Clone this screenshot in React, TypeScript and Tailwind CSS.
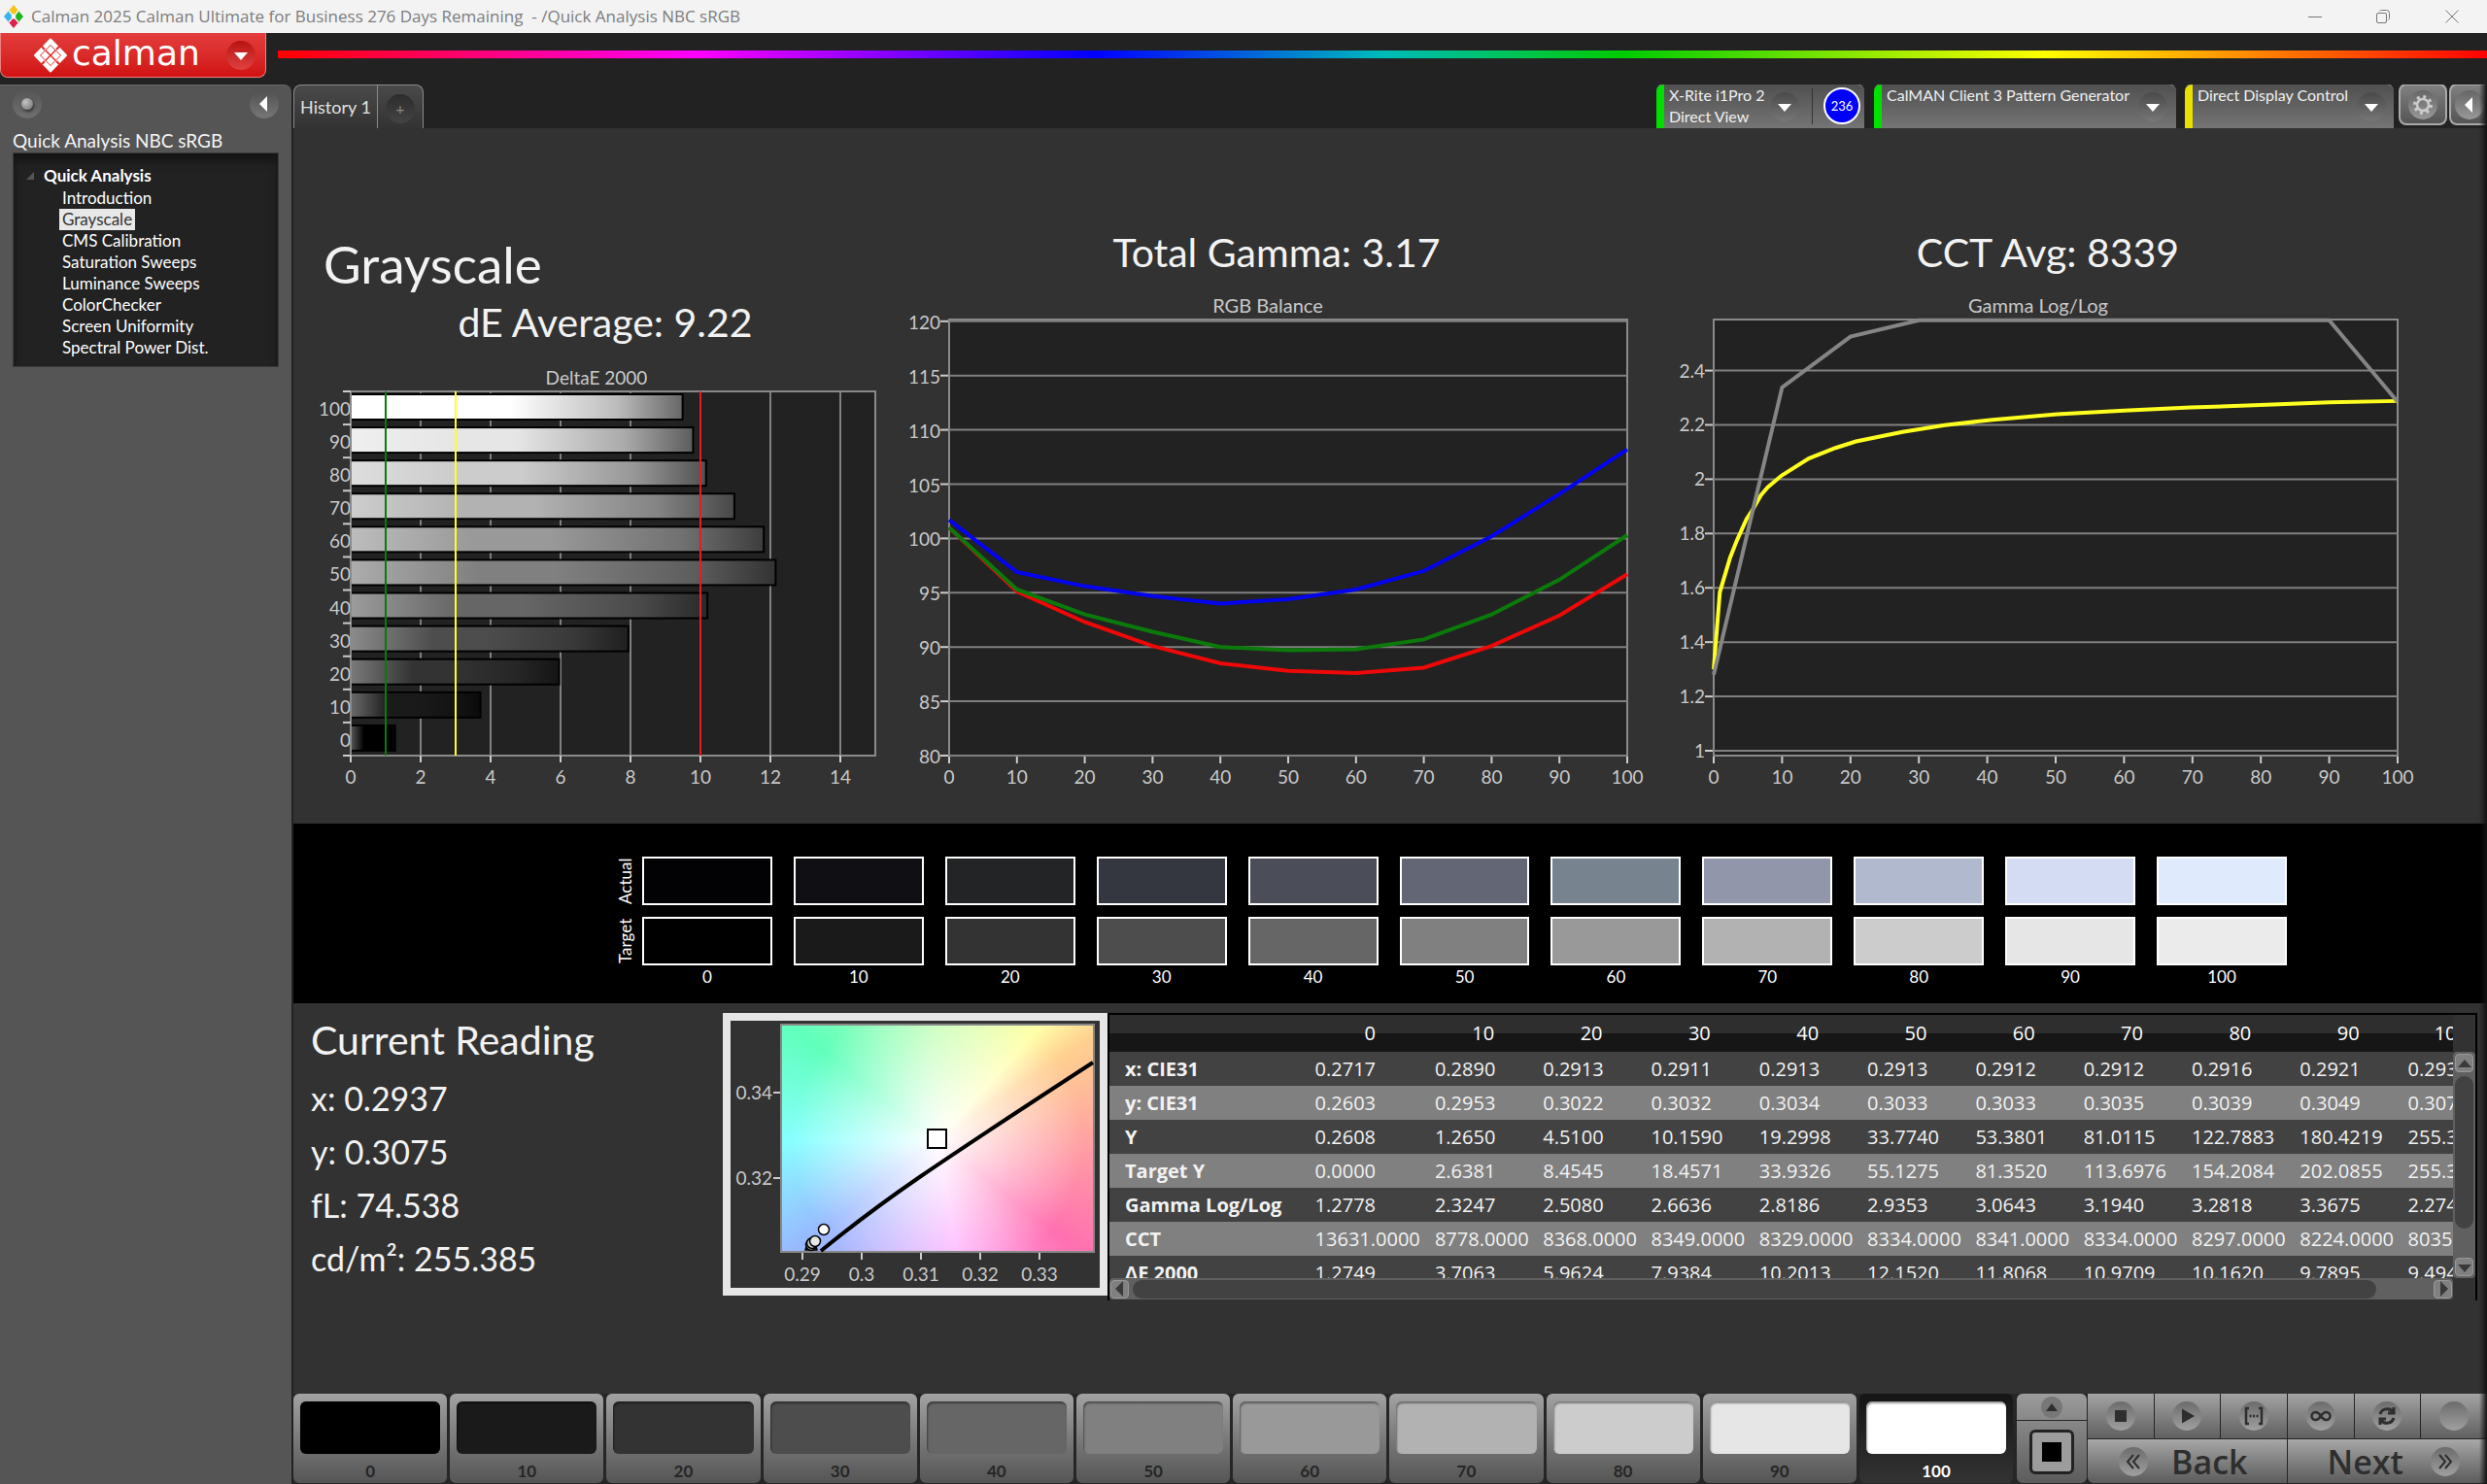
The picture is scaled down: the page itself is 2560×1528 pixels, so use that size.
import { ReactNode } from "react";

const levels = [0, 10, 20, 30, 40, 50, 60, 70, 80, 90, 100];

const treeItems = [
  "Introduction",
  "Grayscale",
  "CMS Calibration",
  "Saturation Sweeps",
  "Luminance Sweeps",
  "ColorChecker",
  "Screen Uniformity",
  "Spectral Power Dist.",
];

const deltaE = [1.27, 3.71, 5.96, 7.94, 10.2, 12.15, 11.81, 10.97, 10.16, 9.79, 9.49];

const actualColors = ["#020204", "#101014", "#232426", "#353740", "#4b4d58", "#636675", "#788390", "#9196aa", "#b0b9cd", "#d3dcf2", "#dfebfd"];
const targetColors = ["#000000", "#1a1a1a", "#333333", "#4d4d4d", "#666666", "#808080", "#999999", "#b2b2b2", "#cccccc", "#e6e6e6", "#ebebeb"];
const patchColors = ["#000000", "#1a1a1a", "#333333", "#4d4d4d", "#666666", "#808080", "#999999", "#b2b2b2", "#cccccc", "#e6e6e6", "#ffffff"];

const rgbSeries = [
  { color: "#ee0808", values: [101, 95.1, 92.3, 90.1, 88.5, 87.8, 87.6, 88.1, 90.1, 92.9, 96.7] },
  { color: "#0b7a0b", values: [101, 95.3, 93, 91.4, 90, 89.7, 89.8, 90.7, 93, 96.2, 100.3] },
  { color: "#0404ee", values: [101.7, 96.9, 95.6, 94.7, 94, 94.4, 95.3, 97, 100.2, 104.1, 108.2] },
];

const gammaMeasured = [[0, 1.28], [10, 2.338], [20, 2.525], [30, 2.585], [90, 2.585], [100, 2.285]];
const gammaTarget = [
  [0, 1.3], [0.9, 1.584], [2.4, 1.711], [3.4, 1.775], [4.8, 1.853], [5.7, 1.888], [6.9, 1.941], [7.9, 1.97], [9.9, 2.013], [13.9, 2.076],
  [17.8, 2.115], [20.8, 2.139], [27.6, 2.174], [33.8, 2.199], [40.8, 2.219], [50.2, 2.239], [60, 2.253], [69.7, 2.264], [79.9, 2.273], [90, 2.283], [100, 2.288],
];

const tableRows = [
  { label: "x: CIE31", values: ["0.2717", "0.2890", "0.2913", "0.2911", "0.2913", "0.2913", "0.2912", "0.2912", "0.2916", "0.2921", "0.2937"] },
  { label: "y: CIE31", values: ["0.2603", "0.2953", "0.3022", "0.3032", "0.3034", "0.3033", "0.3033", "0.3035", "0.3039", "0.3049", "0.3075"] },
  { label: "Y", values: ["0.2608", "1.2650", "4.5100", "10.1590", "19.2998", "33.7740", "53.3801", "81.0115", "122.7883", "180.4219", "255.3850"] },
  { label: "Target Y", values: ["0.0000", "2.6381", "8.4545", "18.4571", "33.9326", "55.1275", "81.3520", "113.6976", "154.2084", "202.0855", "255.3850"] },
  { label: "Gamma Log/Log", values: ["1.2778", "2.3247", "2.5080", "2.6636", "2.8186", "2.9353", "3.0643", "3.1940", "3.2818", "3.3675", "2.2740"] },
  { label: "CCT", values: ["13631.0000", "8778.0000", "8368.0000", "8349.0000", "8329.0000", "8334.0000", "8341.0000", "8334.0000", "8297.0000", "8224.0000", "8035.0000"] },
  { label: "ΔE 2000", values: ["1.2749", "3.7063", "5.9624", "7.9384", "10.2013", "12.1520", "11.8068", "10.9709", "10.1620", "9.7895", "9.4940"] },
];

const TitleBar = () => (
  <header className="flex items-center h-[34px] pl-1 bg-[#f3f3f3] text-[#7d7d7d] text-[17px] font-['Open_Sans',sans-serif]">
    <svg className="w-5 h-6 mr-2" viewBox="0 0 20 24">
      <path d="M10 0l5 6-5 6-5-6z" fill="#f5c518" />
      <path d="M5 6l5 6-5 6-5-6z" fill="#35b5e8" />
      <path d="M15 6l5 6-5 6-5-6z" fill="#1db51d" />
      <path d="M10 12l5 6-5 6-5-6z" fill="#e0204a" />
      <path d="M5 6l10 12M15 6L5 18" stroke="#f3f3f3" strokeWidth="1.5" />
      <path d="M10 9l2.500 3-2.500 3-2.500-3z" fill="#fff" />
    </svg>
    <span className="whitespace-pre">{"Calman 2025 Calman Ultimate for Business 276 Days Remaining  - /Quick Analysis NBC sRGB"}</span>
    <div className="flex ml-auto">
      <button aria-label="Minimize" className="flex items-center justify-center w-[70px] h-8">
        <svg width="14" height="14" stroke="#777" fill="none"><path d="M0 7.500h14" /></svg>
      </button>
      <button aria-label="Restore" className="flex items-center justify-center w-[70px] h-8">
        <svg width="14" height="14" stroke="#777" fill="none">
          <rect x=".5" y="3.500" width="10" height="10" rx="1.500" />
          <path d="M3.500 1.500q.5-1 2-1h5q3 0 3 3v5q0 1.500-1 2" />
        </svg>
      </button>
      <button aria-label="Close" className="flex items-center justify-center w-[72px] h-8">
        <svg width="14" height="14" stroke="#777" fill="none"><path d="M.5.5l13 13M13.500.5l-13 13" /></svg>
      </button>
    </div>
  </header>
);

const Logo = () => (
  <svg className="w-9 h-9" viewBox="0 0 36 36" fill="none">
    <path d="M18 1.500L34 18 18 34.500 2 18z" fill="#fff" stroke="#fff" strokeWidth="2" strokeLinejoin="round" />
    <g fill="#dc2a2a">
      <path d="M18 7l11 11-11 11L7 18z" />
    </g>
    <g fill="#fff">
      <path d="M18 8l4.500 4.500L18 17l-4.500-4.500zM12.500 13.500L17 18l-4.500 4.500L8 18zM23.500 13.500L28 18l-4.500 4.500L19 18zM18 19l4.500 4.500L18 28l-4.500-4.500z" />
    </g>
    <path d="M8 8l4 4M28 8l-4 4M8 28l4-4M28 28l-4-4" stroke="#dc2a2a" strokeWidth="2" />
  </svg>
);

const TopBar = () => (
  <div className="flex items-start h-[53px] bg-[#222]">
    <button className="flex items-center w-[274px] h-[46px] pl-[33px] pr-[10px] rounded-b-lg border border-t-0 border-[#f08080] bg-linear-to-b from-[#e33c3c] to-[#d01010] text-white">
      <Logo />
      <span className="ml-1 pb-1 font-['DejaVu_Sans',sans-serif] text-[36px] leading-[42px]">calman</span>
      <span className="flex items-center justify-center w-[30px] h-[30px] ml-auto rounded-full bg-linear-to-b from-[#b81010] to-[#e04040]">
        <Triangle dir="down" />
      </span>
    </button>
    <div className="flex-1 h-2 mt-[18px] ml-3 bg-[linear-gradient(90deg,#f00,#f0f_19%,#00f_37%,#0bb_50%,#0c0_61%,#ff0_80%,#f00)]" />
  </div>
);

const Triangle = ({ dir, color = "#fff" }: { dir: "down" | "left" | "up" | "right"; color?: string }) => (
  <svg width="16" height="16" viewBox="0 0 16 16" fill={color}>
    {dir === "down" && <path d="M1 5h14l-7 8z" />}
    {dir === "up" && <path d="M1 12h14l-7-8z" />}
    {dir === "left" && <path d="M11 0v16L3 8z" />}
    {dir === "right" && <path d="M5 0v16l8-8z" />}
  </svg>
);

const Sidebar = () => (
  <aside className="w-[302px] shrink-0 bg-[#222] pr-[2px]">
    <div className="h-full rounded-tr-lg bg-[#555] border-t border-[#666] px-[13px]">
      <div className="flex justify-between pt-1">
        <button aria-label="Record" className="flex items-center justify-center w-[30px] h-[30px] rounded-full bg-linear-to-b from-[#555] to-[#707070]">
          <span className="w-3 h-3 rounded-full bg-[radial-gradient(circle_at_35%_35%,#c4c4c4,#6c6c6c)] shadow-[1px_2px_3px_#333]" />
        </button>
        <button aria-label="Collapse" className="flex items-center justify-center w-[30px] h-[30px] rounded-full bg-linear-to-b from-[#505050] to-[#777]">
          <Triangle dir="left" />
        </button>
      </div>
      <h2 className="pt-[11px] text-[19px] leading-6 text-[#f4f4f4]">Quick Analysis NBC sRGB</h2>
      <nav className="h-[221px] pt-3 border border-[#3a3a3a] bg-[#222] text-white shadow-[inset_0_8px_8px_#151515] text-[17px]">
        <div className="flex items-center h-[22px] font-bold">
          <svg className="w-2 h-2 ml-[13px] mr-[10px]" viewBox="0 0 8 8"><path d="M8 0v8H0z" fill="#555" /></svg>
          Quick Analysis
        </div>
        <ul className="pl-[47px] pt-px">
          {treeItems.map((item) => (
            <li key={item} className="h-[22px]">
              <a
                href="#"
                className={
                  item === "Grayscale"
                    ? "inline-block h-[22px] leading-[22px] px-[3px] bg-[#e8e8e8] text-[#333] align-top"
                    : "inline-block h-[22px] leading-[22px] px-[3px] align-top"
                }
              >
                {item}
              </a>
            </li>
          ))}
        </ul>
      </nav>
    </div>
  </aside>
);

const RoundArrow = () => (
  <span className="flex shrink-0 items-center justify-center w-[30px] h-[30px] mt-2 rounded-full bg-linear-to-b from-[#4a4a4a] to-[#777]">
    <Triangle dir="down" />
  </span>
);

const Device = ({ color, children, className }: { color: string; children: ReactNode; className: string }) => (
  <div className={`flex h-[46px] rounded-t-lg overflow-hidden border-t border-[#888] bg-linear-to-b from-[#505050] to-[#757575] ${className}`}>
    <span className="w-2 shrink-0" style={{ background: color }} />
    {children}
  </div>
);

const Tabs = () => (
  <div className="flex items-end h-[45px] bg-[#222] overflow-hidden">
    <div className="flex h-[45px] rounded-t-lg border border-b-0 border-[#8a8a8a] bg-linear-to-b from-[#4a4a4a] to-[#333] overflow-hidden">
      <button className="w-[86px] border-r border-[#8a8a8a] text-lg text-[#e0e0e0]">History 1</button>
      <button aria-label="Add history" className="flex items-center justify-center w-[46px]">
        <span className="flex items-center justify-center w-[30px] h-[30px] mt-1 rounded-full bg-linear-to-b from-[#2c2c2c] to-[#444] text-[#888]">+</span>
      </button>
    </div>
    <div className="flex ml-auto items-start text-base leading-[22px] text-[#f0f0f0]">
      <Device color="#00e000" className="w-[214px] mr-[10px]">
        <button className="flex justify-between flex-1 pl-[5px] pr-[13px] text-left">
          <span>X-Rite i1Pro 2<br />Direct View</span>
          <RoundArrow />
        </button>
        <span className="w-px my-1 bg-[#333]" />
        <span className="flex items-center justify-center w-[38px] h-[38px] ml-[11px] mr-1 mt-[3px] rounded-full border-2 border-white bg-[#00f] text-white text-[13px]">236</span>
      </Device>
      <Device color="#00e000" className="w-[311px] mr-[9px]">
        <button className="flex justify-between flex-1 pl-[5px] pr-[9px] items-start">
          <span>CalMAN Client 3 Pattern Generator</span>
          <RoundArrow />
        </button>
      </Device>
      <Device color="#e8e000" className="w-[215px] mr-[5px]">
        <button className="flex justify-between flex-1 pl-[5px] pr-[8px] items-start">
          <span>Direct Display Control</span>
          <RoundArrow />
        </button>
      </Device>
      <button aria-label="Settings" className="flex items-center justify-center w-[50px] h-[43px] mr-[2px] rounded-lg border-2 border-[#aaa] bg-linear-to-b from-[#808080] to-[#555]">
        <span className="flex items-center justify-center w-[30px] h-[30px] rounded-full bg-linear-to-b from-[#666] to-[#999]">
          <svg width="22" height="22" viewBox="0 0 22 22" fill="none" stroke="#ccc">
            <circle cx="11" cy="11" r="6" strokeWidth="2.500" />
            <circle cx="11" cy="11" r="8.500" strokeWidth="3" strokeDasharray="3 3.675" />
          </svg>
        </span>
      </button>
      <button aria-label="Expand" className="flex items-center pl-[4px] w-[39px] h-[43px] rounded-l-lg border-2 border-r-0 border-[#aaa] bg-linear-to-b from-[#808080] to-[#555]">
        <span className="flex items-center justify-center w-[30px] h-[30px] rounded-full bg-linear-to-b from-[#666] to-[#999]">
          <Triangle dir="left" />
        </span>
      </button>
    </div>
  </div>
);

const DeltaEChart = () => {
  const x = (v: number) => 59 + v * 36;
  const step = 375 / 11;
  return (
    <svg viewBox="0 0 602 440" className="w-full" fontSize="19" fill="#c9c9c9">
      <defs>
        <linearGradient id="barShade">
          <stop offset="0" stopColor="#fff" stopOpacity=".35" />
          <stop offset=".3" stopColor="#fff" stopOpacity="0" />
          <stop offset=".48" stopColor="#000" stopOpacity="0" />
          <stop offset=".8" stopColor="#000" stopOpacity=".26" />
          <stop offset="1" stopColor="#000" stopOpacity=".6" />
        </linearGradient>
      </defs>
      <text x="312" y="20" textAnchor="middle">DeltaE 2000</text>
      <rect x="59" y="27" width="540" height="375" fill="#222" />
      {[2, 4, 6, 8, 10, 12, 14].map((v) => <path key={v} d={`M${x(v)} 27v375`} stroke="#808080" strokeWidth="2" />)}
      {levels.map((l, i) => {
        const y = 402 - (i + 1) * step + 3;
        return (
          <g key={l}>
            <rect x="59" y={y} width={deltaE[i] * 36} height="26" fill={patchColors[i]} />
            <rect x="59" y={y} width={deltaE[i] * 36} height="26" fill="url(#barShade)" stroke="#000" strokeWidth="2" />
            <text x="59" y={y + 22} textAnchor="end">{l}</text>
          </g>
        );
      })}
      <rect x="59" y="27" width="540" height="375" fill="none" stroke="#8a8a8a" strokeWidth="2" />
      {Array.from({ length: 12 }, (_, i) => <path key={i} d={`M51 ${27 + i * step}h8`} stroke="#ccc" strokeWidth="2" />)}
      {[0, 2, 4, 6, 8, 10, 12, 14].map((v) => (
        <g key={v}>
          <path d={`M${x(v)} 402v7`} stroke="#ccc" strokeWidth="2" />
          <text x={x(v)} y="431" textAnchor="middle">{v}</text>
        </g>
      ))}
      <path d={`M${x(1)} 27v375`} stroke="#0a7a0a" strokeWidth="2" />
      <path d={`M${x(3)} 27v375`} stroke="#ffff20" strokeWidth="2" />
      <path d={`M${x(10)} 27v375`} stroke="#e02020" strokeWidth="2" />
    </svg>
  );
};

const RgbChart = () => {
  const x = (v: number) => 73 + v * 6.98;
  const y = (v: number) => 478 - (v - 80) * 11.18;
  return (
    <svg viewBox="0 0 820 516" className="w-full" fontSize="19" fill="#c9c9c9">
      <text x="401" y="22" textAnchor="middle" fontSize="20">RGB Balance</text>
      <rect x="73" y="29" width="698" height="449" fill="#222" stroke="#8a8a8a" strokeWidth="2" />
      {[80, 85, 90, 95, 100, 105, 110, 115, 120].map((v) => (
        <g key={v}>
          <path d={`M73 ${y(v)}h698`} stroke="#808080" strokeWidth="2" />
          <path d={`M64 ${y(v)}h8`} stroke="#ccc" strokeWidth="2" />
          <text x="64" y={y(v) + 8} textAnchor="end">{v}</text>
        </g>
      ))}
      {levels.map((v) => (
        <g key={v}>
          <path d={`M${x(v)} 479v7`} stroke="#ccc" strokeWidth="2" />
          <text x={x(v)} y="507" textAnchor="middle">{v}</text>
        </g>
      ))}
      {rgbSeries.map((s) => (
        <polyline key={s.color} points={s.values.map((v, i) => `${x(i * 10)},${y(v)}`).join(" ")} fill="none" stroke={s.color} strokeWidth="4" />
      ))}
    </svg>
  );
};

const GammaChart = () => {
  const x = (v: number) => 40 + v * 7.04;
  const y = (v: number) => 473 - (v - 1) * 279.6;
  const line = (pts: number[][]) => pts.map(([a, b]) => `${x(a)},${y(b)}`).join(" ");
  return (
    <svg viewBox="0 0 836 516" className="w-full" fontSize="19" fill="#c9c9c9">
      <text x="374" y="22" textAnchor="middle" fontSize="20">Gamma Log/Log</text>
      <rect x="40" y="29" width="704" height="449" fill="#222" stroke="#8a8a8a" strokeWidth="2" />
      {[1, 1.2, 1.4, 1.6, 1.8, 2, 2.2, 2.4].map((v) => (
        <g key={v}>
          <path d={`M40 ${y(v)}h704`} stroke="#808080" strokeWidth="2" />
          <path d={`M31 ${y(v)}h8`} stroke="#ccc" strokeWidth="2" />
          <text x="31" y={y(v) + 7} textAnchor="end">{v}</text>
        </g>
      ))}
      {levels.map((v) => (
        <g key={v}>
          <path d={`M${x(v)} 479v7`} stroke="#ccc" strokeWidth="2" />
          <text x={x(v)} y="507" textAnchor="middle">{v}</text>
        </g>
      ))}
      <polyline points={line(gammaTarget)} fill="none" stroke="#ffff20" strokeWidth="4" />
      <polyline points={line(gammaMeasured)} fill="none" stroke="#858585" strokeWidth="4" />
    </svg>
  );
};

const Charts = () => (
  <section className="grid grid-cols-[602fr_820fr_836fr] items-start pb-8 text-[#f2f2f2]">
    <div className="pt-[108px]">
      <h1 className="pl-[31px] text-[53px] leading-[64px]">Grayscale</h1>
      <p className="pl-10 mb-4 text-center text-[41px] leading-[56px]">dE Average: 9.22</p>
      <DeltaEChart />
    </div>
    <div className="pt-[100px]">
      <p className="mb-3 text-center text-[41px] leading-[56px]">Total Gamma: 3.17</p>
      <RgbChart />
    </div>
    <div className="pt-[100px]">
      <p className="pr-[68px] mb-3 text-center text-[41px] leading-[56px]">CCT Avg: 8339</p>
      <GammaChart />
    </div>
  </section>
);

const SwatchRow = ({ name, colors }: { name: string; colors: string[] }) => (
  <div className="flex items-center">
    <span className="w-[34px] h-[50px] text-center text-[17px] leading-[34px] text-white [writing-mode:vertical-rl] rotate-180">{name}</span>
    <div className="grid flex-1 grid-cols-11 gap-[22px]">
      {colors.map((c, i) => <div key={i} className="h-[50px] border-2 border-white" style={{ background: c }} />)}
    </div>
  </div>
);

const Swatches = () => (
  <section className="flex flex-col gap-3 h-[185px] pt-[34px] pl-[325px] pr-[206px] bg-black">
    <SwatchRow name="Actual" colors={actualColors} />
    <SwatchRow name="Target" colors={targetColors} />
    <div className="grid grid-cols-11 gap-[22px] pl-[34px] -mt-2.5 text-center text-[17px] leading-5 text-white">
      {levels.map((l) => <span key={l}>{l}</span>)}
    </div>
  </section>
);

const CieChart = () => (
  <div className="relative w-[396px] h-[291px] shrink-0 border-8 border-[#e6e6e6] bg-[#323232] pl-[52px] pt-1">
    <div className="w-[322px] h-[234px] bg-[radial-gradient(circle_at_50%_51%,#fff,#fff0_75%),conic-gradient(at_50%_51%,#c4ffb4,#ffffa8_42deg,#ffd090_56deg,#ffa8a0_85deg,#ff70b0_128deg,#ffb0ff_170deg,#98b8ff_232deg,#88ffff_270deg,#60ffbc_308deg,#c4ffb4)]" />
    <svg className="absolute -inset-2" width="396" height="291" viewBox="0 0 396 291" fontSize="19" fill="#c9c9c9">
      <rect x="60" y="12" width="322" height="234" fill="none" stroke="#888" strokeWidth="2" />
      <path d="M101 245Q150 205 204 168T381 51" fill="none" stroke="#000" strokeWidth="4" />
      <rect x="211" y="120" width="19" height="19" fill="#fff" stroke="#000" strokeWidth="2" />
      <g stroke="#000" strokeWidth="1.500">
        <path d="M85 244a6 6 0 0 1 12 0z" fill="#666" />
        <circle cx="91" cy="239" r="5.500" fill="#aaa" />
        <circle cx="92" cy="237" r="5.500" fill="#ccc" />
        <circle cx="95" cy="235" r="5.500" fill="#e6e6e6" />
        <circle cx="104" cy="223" r="5.500" fill="#fff" />
      </g>
      {[["0.34", 82], ["0.32", 170]].map(([t, y]) => (
        <g key={t}>
          <text x="51" y={Number(y) + 7} textAnchor="end">{t}</text>
          <path d={`M52 ${y}h7`} stroke="#ccc" strokeWidth="2" />
        </g>
      ))}
      {["0.29", "0.3", "0.31", "0.32", "0.33"].map((t, i) => (
        <g key={t}>
          <text x={82 + i * 61} y="276" textAnchor="middle">{t}</text>
          <path d={`M${82 + i * 61} 247v7`} stroke="#ccc" strokeWidth="2" />
        </g>
      ))}
    </svg>
  </div>
);

const ScrollButton = ({ dir, label }: { dir: "up" | "down" | "left" | "right"; label: string }) => (
  <button aria-label={label} className="flex items-center justify-center w-[19px] h-[19px] shrink-0 rounded bg-[#808080] border border-[#999]">
    <Triangle dir={dir} color="#3a3a3a" />
  </button>
);

const Readings = () => (
  <div className="flex-1 min-w-0 h-[296px] mr-[10px] border-t-2 border-x-2 border-black">
    <div className="flex h-[271px]">
      <div className="flex-1 min-w-0 overflow-hidden font-['Open_Sans',sans-serif] text-xl text-[#f2f2f2]">
        <table className="table-fixed w-[1448px] border-collapse">
          <thead>
            <tr className="h-[38px] text-white bg-[linear-gradient(#2e2e2e_50%,#161616_50%)]">
              <th className="w-[211px]" />
              {levels.map((l) => (
                <th key={l} className={l === 0 ? "w-[123px] pr-[61px] p-0 font-normal text-right" : "w-[111px] pr-[50px] p-0 font-normal text-right"}>{l}</th>
              ))}
            </tr>
          </thead>
          <tbody>
            {tableRows.map((row) => (
              <tr key={row.label} className="h-[35px] odd:bg-[#424242] even:bg-[#808080]">
                <th className="p-0 pl-4 text-left font-bold leading-[34px] whitespace-nowrap">{row.label}</th>
                {row.values.map((v, i) => <td key={i} className="p-0 leading-[34px]">{v}</td>)}
              </tr>
            ))}
          </tbody>
        </table>
      </div>
      <div className="flex flex-col items-center w-[23px] mt-[38px] gap-1 py-[2px] bg-[#606060] rounded">
        <ScrollButton dir="up" label="Scroll up" />
        <div className="w-[19px] h-[157px] rounded-full bg-[#424242]" />
        <div className="mt-auto"><ScrollButton dir="down" label="Scroll down" /></div>
      </div>
    </div>
    <div className="flex items-center h-[22px] mr-[23px] gap-1 px-[1px] bg-[#606060] rounded">
      <ScrollButton dir="left" label="Scroll left" />
      <div className="flex-1 h-[19px] mr-[55px] rounded-full bg-[#424242]" />
      <ScrollButton dir="right" label="Scroll right" />
    </div>
  </div>
);

const Current = () => (
  <section className="flex items-start flex-1 pt-[10px]">
    <div className="w-[442px] shrink-0 pl-[18px] text-[#f2f2f2]">
      <h2 className="text-[41px] leading-[56px]">Current Reading</h2>
      <ul className="pt-1 text-[34px] leading-[55px]">
        <li>x: 0.2937</li>
        <li>y: 0.3075</li>
        <li>fL: 74.538</li>
        <li>cd/m²: 255.385</li>
      </ul>
    </div>
    <CieChart />
    <Readings />
  </section>
);

const Knob = ({ children }: { children?: ReactNode }) => (
  <span className="flex items-center justify-center w-[30px] h-[30px] rounded-full bg-linear-to-b from-[#6c6c6c] to-[#a0a0a0]">
    <svg width="24" height="24" viewBox="0 0 24 24" fill="none" stroke="#2e2e2e" strokeWidth="2.500">{children}</svg>
  </span>
);

const transport = [
  { label: "Stop", icon: <path d="M6 6h12v12H6z" fill="#2e2e2e" stroke="none" /> },
  { label: "Play", icon: <path d="M7 4.500L20 12 7 19.500z" fill="#2e2e2e" stroke="none" /> },
  { label: "Read range", icon: <path d="M7 4H4v16h3M17 4h3v16h-3M7.500 12h2M11 12h2M14.500 12h2" /> },
  { label: "Continuous", icon: <path d="M12 12C10 9 8.500 8 6.500 8a4 4 0 0 0 0 8c2 0 3.500-1 5.500-4s3.500-4 5.500-4a4 4 0 0 1 0 8c-2 0-3.500-1-5.500-4z" /> },
  { label: "Refresh", icon: <path d="M5 10a7.500 7.500 0 0 1 13-2.500M19 14a7.500 7.500 0 0 1-13 2.500M19 3v6h-6M5 21v-6h6" strokeWidth="3" /> },
  { label: "Blank", icon: null },
];

const BottomBar = () => (
  <footer className="flex h-[93px] pb-px bg-[#262626]">
    <div className="flex flex-1 gap-[3px] mr-1">
      {levels.map((l, i) => (
        <button
          key={l}
          className={
            l === 100
              ? "flex flex-col items-center flex-1 pt-2 px-[7px] rounded-md bg-linear-to-b from-[#151515] to-[#333] text-white"
              : "flex flex-col items-center flex-1 pt-2 px-[7px] rounded-md bg-linear-to-b from-[#a2a2a2] to-[#555] text-[#262626]"
          }
        >
          <span className="w-full h-[54px] rounded-md shadow-[inset_1px_2px_2px_#0006]" style={{ background: patchColors[i] }} />
          <span className="pt-[8px] text-[17px] leading-5 font-bold">{l}</span>
        </button>
      ))}
    </div>
    <div className="flex flex-col w-[72px] gap-px mr-px">
      <button aria-label="Show options" className="flex items-center justify-center h-[27px] rounded-t-md bg-linear-to-b from-[#9c9c9c] to-[#888]">
        <span className="flex items-center justify-center w-[22px] h-[22px] rounded-full bg-[#777]">
          <svg width="12" height="8"><path d="M0 8h12L6 0z" fill="#2e2e2e" /></svg>
        </span>
      </button>
      <button aria-label="Pattern window" className="flex items-center justify-center flex-1 rounded-b-md bg-linear-to-b from-[#888] to-[#5c5c5c]">
        <span className="flex items-center justify-center w-[46px] h-[46px] rounded-md border-[3px] border-[#222] bg-[#9c9c9c]">
          <span className="w-5 h-5 bg-black" />
        </span>
      </button>
    </div>
    <div className="flex flex-col w-[411px] gap-px">
      <div className="grid grid-cols-6 gap-px h-[46px]">
        {transport.map((t) => (
          <button key={t.label} aria-label={t.label} className="flex items-center justify-center bg-linear-to-b from-[#a4a4a4] to-[#606060]">
            <Knob>{t.icon}</Knob>
          </button>
        ))}
      </div>
      <div className="grid flex-1 grid-cols-2 gap-px text-[34px] leading-[44px] font-semibold text-[#2e2e2e] font-['Open_Sans',sans-serif]">
        <button className="flex items-center pl-8 gap-6 rounded-bl-md bg-linear-to-b from-[#a8a8a8] to-[#5c5c5c]">
          <Knob><path d="M12 5l-6 7 6 7M18 5l-6 7 6 7" strokeWidth="2" /></Knob>
          Back
        </button>
        <button className="flex items-center justify-end pr-7 gap-7 bg-linear-to-b from-[#a8a8a8] to-[#5c5c5c]">
          Next
          <Knob><path d="M6 5l6 7-6 7M12 5l6 7-6 7" strokeWidth="2" /></Knob>
        </button>
      </div>
    </div>
  </footer>
);

export default function App() {
  return (
    <div className="flex flex-col min-h-screen bg-[#323232] font-['Lato',sans-serif]">
      <TitleBar />
      <TopBar />
      <div className="flex flex-1">
        <Sidebar />
        <main className="relative flex flex-col flex-1 min-w-0">
          <Tabs />
          <Charts />
          <Swatches />
          <Current />
          <BottomBar />
          <div className="absolute inset-y-0 right-0 w-2 pointer-events-none bg-linear-to-r from-[#0000] to-[#111]" />
        </main>
      </div>
    </div>
  );
}
